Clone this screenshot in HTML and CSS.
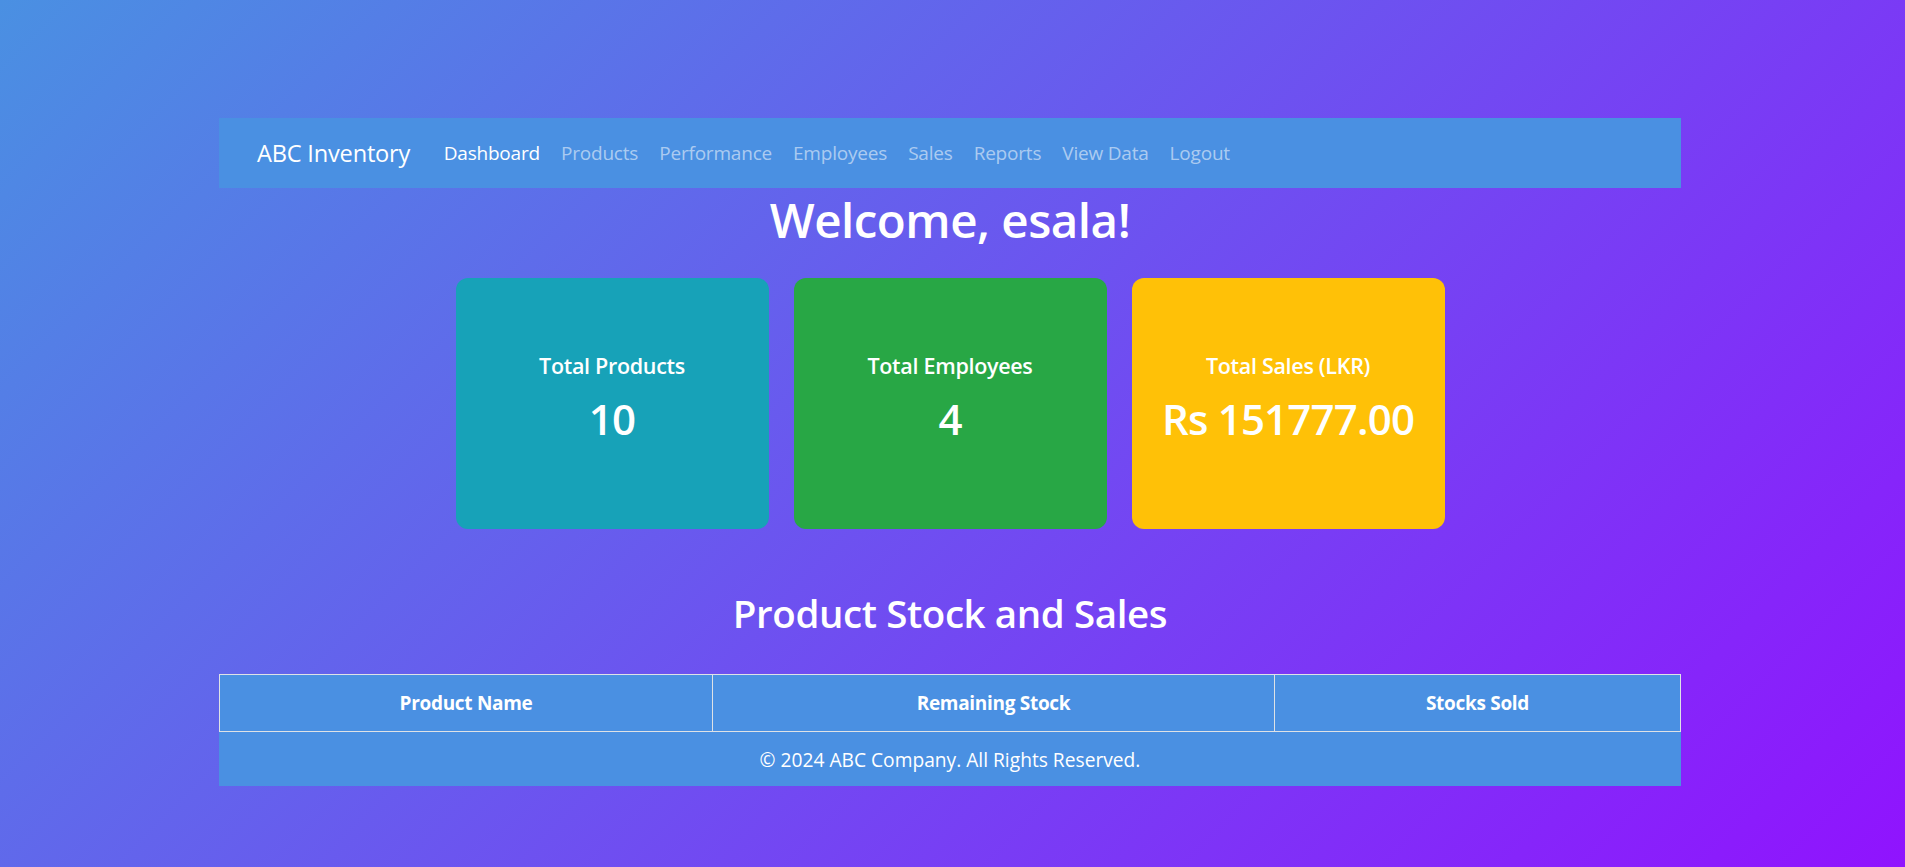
FILE: index.html
```html
<!DOCTYPE html>
<html lang="en">
<head>
<meta charset="utf-8">
<title>ABC Inventory - Dashboard</title>
<link rel="stylesheet" href="styles.css">
</head>
<body>
<div class="page">
  <nav class="navbar">
    <a class="brand" href="#">ABC Inventory</a>
    <ul class="nav">
      <li><a class="nav-link active" href="#">Dashboard</a></li>
      <li><a class="nav-link" href="#">Products</a></li>
      <li><a class="nav-link" href="#">Performance</a></li>
      <li><a class="nav-link" href="#">Employees</a></li>
      <li><a class="nav-link" href="#">Sales</a></li>
      <li><a class="nav-link" href="#">Reports</a></li>
      <li><a class="nav-link" href="#">View Data</a></li>
      <li><a class="nav-link" href="#">Logout</a></li>
    </ul>
  </nav>

  <h1 class="welcome">Welcome, esala!</h1>

  <div class="cards">
    <div class="card card-info">
      <h5 class="card-title">Total Products</h5>
      <p class="card-value">10</p>
    </div>
    <div class="card card-success">
      <h5 class="card-title">Total Employees</h5>
      <p class="card-value">4</p>
    </div>
    <div class="card card-warning">
      <h5 class="card-title">Total Sales (LKR)</h5>
      <p class="card-value">Rs 151777.00</p>
    </div>
  </div>

  <h2 class="section-title">Product Stock and Sales</h2>

  <table class="stock-table">
    <thead>
      <tr>
        <th class="col-name">Product Name</th>
        <th class="col-stock">Remaining Stock</th>
        <th class="col-sold">Stocks Sold</th>
      </tr>
    </thead>
    <tbody></tbody>
  </table>

  <footer class="footer">© 2024 ABC Company. All Rights Reserved.</footer>
</div>
</body>
</html>
```

FILE: styles.css
```css
html, body {
  margin: 0;
  padding: 0;
}

body {
  min-height: 100vh;
  background: linear-gradient(135deg, #4a90e2 0%, #9013fe 100%);
  font-family: "Open Sans", "Noto Sans", "Liberation Sans", sans-serif;
  color: #fff;
}

.page {
  width: 1462px;
  margin: 0 0 0 219px;
  padding-top: 118px;
  padding-bottom: 40px;
}

.navbar {
  height: 70px;
  background: #4a90e2;
  display: flex;
  align-items: center;
  padding-left: 38px;
  box-sizing: border-box;
}

.brand {
  color: #fff;
  text-decoration: none;
  font-size: 23.6px;
  margin-right: 23px;
  letter-spacing: -0.2px;
}

.nav {
  list-style: none;
  display: flex;
  margin: 0;
  padding: 0;
}

.nav-link {
  display: block;
  padding: 8px 10.5px;
  font-size: 19px;
  color: rgba(255, 255, 255, 0.55);
  text-decoration: none;
  letter-spacing: -0.2px;
}

.nav-link.active {
  color: #fff;
}

.welcome {
  margin: 3px 0 0;
  text-align: center;
  font-size: 47.5px;
  font-weight: 600;
  line-height: 58px;
  letter-spacing: -0.5px;
}

.cards {
  display: flex;
  justify-content: center;
  gap: 25px;
  margin-top: 29px;
}

.card {
  width: 313px;
  height: 251px;
  border-radius: 12px;
  display: flex;
  flex-direction: column;
  justify-content: center;
  align-items: center;
  box-sizing: border-box;
}

.card-info { background: #17a2b8; }
.card-success { background: #28a745; }
.card-warning { background: #ffc107; }

.card-title {
  margin: 0 0 9.6px;
  font-size: 21.5px;
  font-weight: 600;
  line-height: 28.8px;
  letter-spacing: -0.3px;
}

.card-value {
  margin: 0 0 8px;
  font-size: 42px;
  font-weight: 600;
  line-height: 57.6px;
  letter-spacing: -0.8px;
}

.section-title {
  margin: 61px 0 0;
  text-align: center;
  font-size: 38.5px;
  font-weight: 600;
  line-height: 46px;
  letter-spacing: -0.4px;
}

.stock-table {
  width: 100%;
  margin-top: 38px;
  border-collapse: collapse;
  table-layout: fixed;
  background: #4a90e2;
}

.stock-table th {
  box-sizing: border-box;
  border: 1px solid #dee2e6;
  padding: 13.5px 12px;
  font-size: 19px;
  font-weight: 700;
  line-height: 28.8px;
  text-align: center;
  letter-spacing: -0.3px;
}

.col-name { width: 493px; }
.col-stock { width: 562px; }
.col-sold { width: auto; }

.footer {
  background: #4a90e2;
  text-align: center;
  font-size: 19.2px;
  line-height: 28.8px;
  padding: 14px 0 11px;
  letter-spacing: 0;
}
```
